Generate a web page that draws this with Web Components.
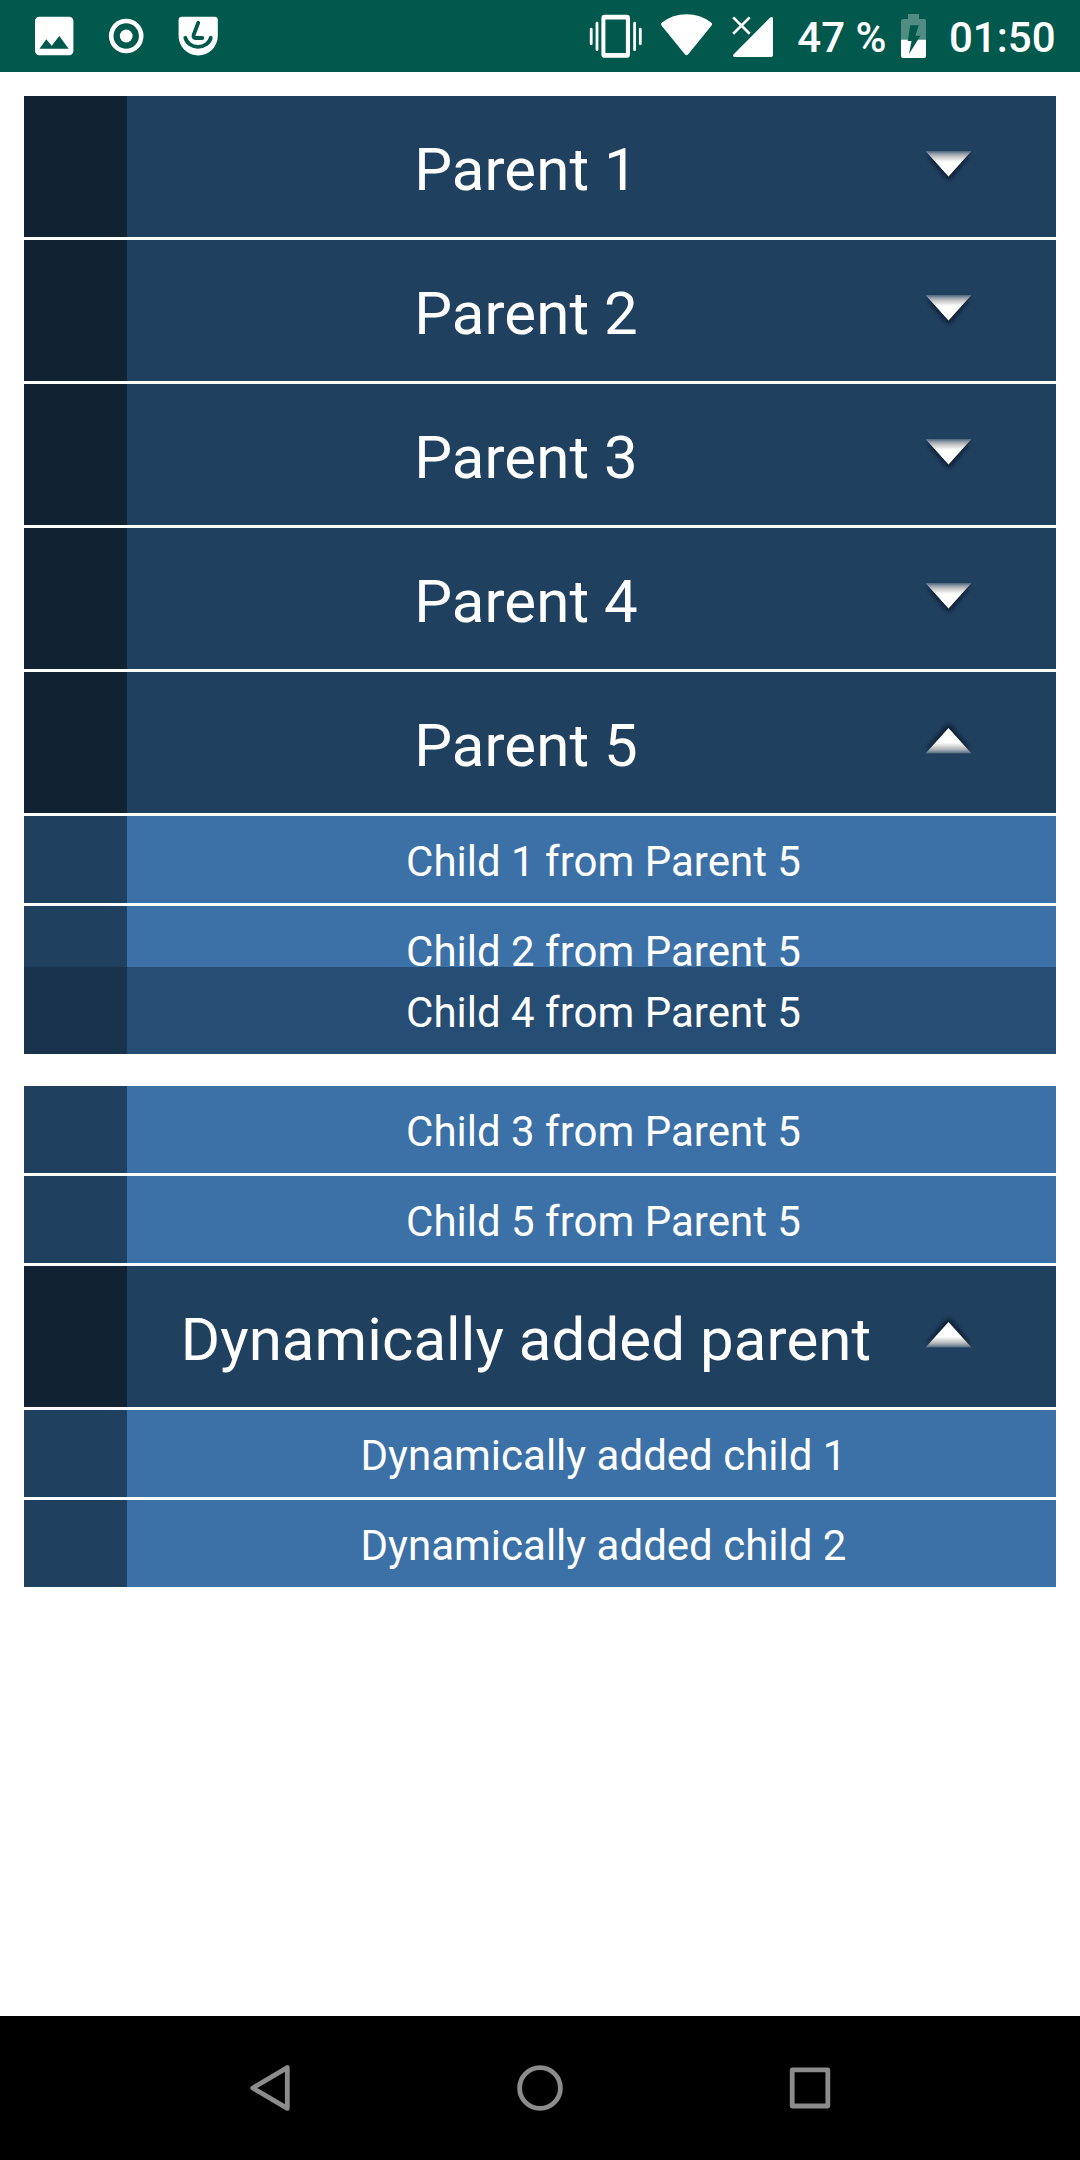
<!DOCTYPE html>
<html lang="en">
<head>
<meta charset="utf-8">
<title>Expandable list</title>
<style>
html,body{margin:0;padding:0;background:#fff}
body{font-family:Roboto,"Liberation Sans",sans-serif;color:#fff}
</style>
</head>
<body>
<app-screen>
  <status-bar slot="status" battery="47 %" time="01:50"></status-bar>
  <list-row>Parent 1</list-row>
  <list-row>Parent 2</list-row>
  <list-row>Parent 3</list-row>
  <list-row>Parent 4</list-row>
  <list-row open>Parent 5</list-row>
  <list-row child>Child 1 from Parent 5</list-row>
  <list-row child>Child 2 from Parent 5</list-row>
  <list-row child dragged>Child 4 from Parent 5</list-row>
  <list-row child>Child 3 from Parent 5</list-row>
  <list-row child>Child 5 from Parent 5</list-row>
  <list-row open>Dynamically added parent</list-row>
  <list-row child>Dynamically added child 1</list-row>
  <list-row child>Dynamically added child 2</list-row>
  <nav-bar slot="nav"></nav-bar>
</app-screen>
<script>
class Base extends HTMLElement {
  constructor() {
    super();
    this.attachShadow({mode: 'open'});
  }
  connectedCallback() { this.shadowRoot.innerHTML = this.render(); }
}

customElements.define('app-screen', class extends Base {
  render() {
    return `<style>
      :host{display:flex;flex-direction:column;width:1080px;height:2160px;overflow:hidden;background:#fff}
      main{flex:1;display:flex;flex-direction:column;gap:3px;padding:24px}
    </style>
    <slot name="status"></slot><main><slot></slot></main><slot name="nav"></slot>`;
  }
});

customElements.define('status-bar', class extends Base {
  render() {
    return `<style>
      :host{display:flex;flex:none;height:72px;box-sizing:border-box;padding:0 24.5px 0 35px;background:#00594c;font-size:42px;font-weight:500;justify-content:space-between}
      div{display:flex;height:72px}
      svg{display:block;flex:none;fill:#fff}
      span{line-height:49px;padding-top:13px;white-space:nowrap}
      .pct{margin-left:23px}
      .bat{margin-left:15px}
      .time{margin-left:22.5px}
    </style>
    <div>
      <svg width="55" height="72" viewBox="35 0 55 72"><rect x="35" y="16.7" width="38.4" height="38.6" rx="4.2"/><path fill="#00594c" d="M39.5 48.8L46.3 39.3 51.7 45.8 59.3 36 68.7 48.8z"/></svg>
      <svg width="80" height="72" viewBox="90 0 80 72"><circle cx="126.2" cy="36" r="15" fill="none" stroke="#fff" stroke-width="4.6"/><circle cx="126.2" cy="36" r="6.4"/></svg>
      <svg width="60" height="72" viewBox="170 0 60 72"><path d="M182 16.8H214.5Q217.8 16.8 217.8 20V35.8A19.6 19.6 0 0 1 178.6 35.8V20Q178.6 16.8 182 16.8z"/><g fill="none" stroke="#00594c" stroke-width="3.8" stroke-linecap="round" stroke-linejoin="round"><path d="M198.2 22.8L193.6 35Q193 38 195.5 38H202.3M185.3 37.8A13 11.2 0 0 0 210.8 37.8"/></g></svg>
    </div>
    <div>
      <svg width="71" height="72" viewBox="584 0 71 72"><path fill="none" stroke="#fff" stroke-width="2.8" stroke-linecap="round" d="M591.2 29.2V43.8M597 23.2V49.7M634.6 23.2V49.7M640.3 29.2V43.8"/><path fill-rule="evenodd" d="M604.8 14.8H626.6Q630 14.8 630 18.2V54.4Q630 57.8 626.6 57.8H604.8Q601.4 57.8 601.4 54.4V18.2Q601.4 14.8 604.8 14.8zM605.4 19.6V53H625.9V19.6z"/></svg>
      <svg width="67" height="72" viewBox="655 0 67 72"><path d="M661.5 25.4Q660.4 23.7 662 22.5Q672.5 14.2 686.5 14.2T711.2 22.5Q712.9 23.7 711.6 25.4L688.2 54.3Q686.5 56.2 684.8 54.3z"/></svg>
      <svg width="52" height="72" viewBox="722 0 52 72"><path d="M770.2 17.6Q773 15.7 773 19V55Q773 57 771 57H734.5Q731.8 56.6 733.7 54.2z"/><path fill="none" stroke="#fff" stroke-width="2.7" d="M733.2 17.4L749.7 33.7M749.7 17.4L733.2 33.7"/></svg>
      <span class="pct">${this.getAttribute('battery')}</span>
      <svg class="bat" width="25" height="72" viewBox="901 0 25 72"><path fill="#508c82" d="M908 14H919V19H924.3Q926 19.2 926 21V40H901V21Q901 19.2 902.7 19H908z"/><path d="M901 39.7H926V56Q926 58 924 58H903Q901 58 901 56z"/><path fill="#00594c" d="M910.2 25.3H918.8L915.3 35.8H920.5L909 54 911.5 41H907.8z"/></svg>
      <span class="time">${this.getAttribute('time')}</span>
    </div>`;
  }
});

customElements.define('list-row', class extends Base {
  render() {
    const child = this.hasAttribute('child');
    const open = this.hasAttribute('open');
    const arrow = child ? '' : `<svg width="49" height="42" viewBox="0 0 49 42">
      <defs>
        <linearGradient id="g" x1="0" y1="${open ? 1 : 0}" x2="0" y2="${open ? 0 : 1}"><stop offset="0" stop-color="#fff" stop-opacity=".2"/><stop offset=".2" stop-color="#d0d0d0" stop-opacity=".9"/><stop offset=".42" stop-color="#fff"/></linearGradient>
        <filter id="b" x="-30%" y="-30%" width="160%" height="160%"><feGaussianBlur stdDeviation="2.6"/></filter>
      </defs>
      ${open
        ? '<path filter="url(#b)" fill="#081322" d="M4 29L24.5 4 45 29z"/><path fill="url(#g)" d="M1.5 33.5L24.5 8 47.5 33.5z"/>'
        : '<path filter="url(#b)" fill="#081322" d="M4 11L24.5 36 45 11z"/><path fill="url(#g)" d="M1.5 7L24.5 32.5 47.5 7z"/>'}
    </svg>`;
    return `<style>
      :host{display:flex;flex:none;height:141px;background:#20405f;font-size:60px;line-height:70px;letter-spacing:.07px}
      :host([child]){height:87px;background:#3b71a7;font-size:42px;line-height:49px;letter-spacing:0}
      :host([dragged]){position:relative;top:-29px;background:#264d73}
      .mark{flex:none;width:103px;background:#112232}
      :host([child]) .mark{background:#20405f}
      :host([dragged]) .mark{background:#19334c}
      .label{flex:1;display:flex;justify-content:center;align-items:center;padding:6px 0 0 24px;white-space:nowrap}
      :host([child]) .label{padding-top:4px}
      .arrow{flex:none;width:155px;padding-top:48px}
      .arrow svg{display:block;margin-left:23px}
    </style>
    <div class="mark"></div><div class="label"><slot></slot></div>${child ? '' : `<div class="arrow">${arrow}</div>`}`;
  }
});

customElements.define('nav-bar', class extends Base {
  render() {
    return `<style>
      :host{display:flex;flex:none;height:144px;background:#000;justify-content:center;gap:210px;align-items:center}
      svg{display:block;fill:none;stroke:#8c8c8c;stroke-width:4.8;stroke-linejoin:round}
    </style>
    <svg width="60" height="60" viewBox="0 0 60 60"><path d="M12.8 30L47.3 9.6V50.4z"/></svg>
    <svg width="60" height="60" viewBox="0 0 60 60"><circle cx="30" cy="30" r="20.4"/></svg>
    <svg width="60" height="60" viewBox="0 0 60 60"><rect x="12.2" y="11.8" width="35.6" height="36.2"/></svg>`;
  }
});
</script>
</body>
</html>
